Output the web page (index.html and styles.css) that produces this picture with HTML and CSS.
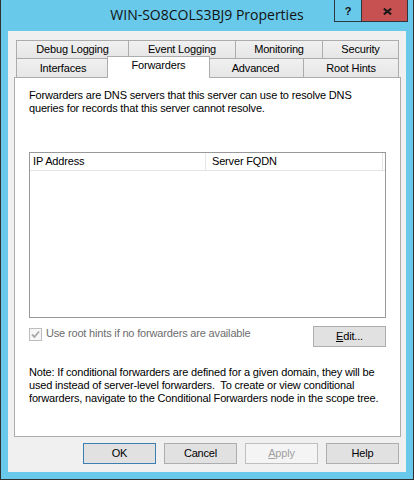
FILE: index.html
```html
<!DOCTYPE html>
<html>
<head>
<meta charset="utf-8">
<link rel="stylesheet" href="styles.css">
</head>
<body>
<div class="window">
  <div class="titlebar">
    <div class="title">WIN-SO8COLS3BJ9 Properties</div>
    <div class="caption">
      <div class="cbtn help">?</div>
      <div class="cbtn close"><svg width="9" height="7" viewBox="0 0 9 7"><path d="M0.8 0.6 L8.2 6.4 M8.2 0.6 L0.8 6.4" stroke="#1a1a1a" stroke-width="2" fill="none"/></svg></div>
    </div>
  </div>
  <div class="client">
    <div class="tabs">
      <div class="tabrow row1">
        <div class="tab w-debug">Debug Logging</div>
        <div class="tab w-event">Event Logging</div>
        <div class="tab w-mon">Monitoring</div>
        <div class="tab w-sec">Security</div>
      </div>
      <div class="tabrow row2">
        <div class="tab w-int">Interfaces</div>
        <div class="tab sel">Forwarders</div>
        <div class="tab w-adv">Advanced</div>
        <div class="tab w-root">Root Hints</div>
      </div>
    </div>
    <div class="panel">
      <p class="intro">Forwarders are DNS servers that this server can use to resolve DNS<br>queries for records that this server cannot resolve.</p>
      <div class="list">
        <div class="list-head">
          <div class="col c1">IP Address</div>
          <div class="col c2">Server FQDN</div>
        </div>
      </div>
      <div class="opts">
        <div class="check"><svg width="11" height="11" viewBox="0 0 11 11"><path d="M2 5.5 L4.5 8 L9 2.5" stroke="#a8a8a8" stroke-width="1.8" fill="none"/></svg></div>
        <div class="check-label">Use root hints if no forwarders are available</div>
        <div class="btn edit"><u>E</u>dit...</div>
      </div>
      <p class="note">Note: If conditional forwarders are defined for a given domain, they will be<br>used instead of server-level forwarders.&nbsp; To create or view conditional<br>forwarders, navigate to the Conditional Forwarders node in the scope tree.</p>
    </div>
    <div class="buttons">
      <div class="btn default">OK</div>
      <div class="btn">Cancel</div>
      <div class="btn disabled"><u>A</u>pply</div>
      <div class="btn">Help</div>
    </div>
  </div>
</div>
</body>
</html>
```
FILE: styles.css
```css
* { box-sizing: border-box; }
html, body { margin: 0; padding: 0; }
body {
  width: 414px;
  height: 480px;
  overflow: hidden;
  font-family: "Liberation Sans", Arial, sans-serif;
  font-size: 11px;
  letter-spacing: -0.17px;
  color: #000;
  background: #fff;
}
.window {
  width: 414px;
  height: 480px;
  background: #69c9ea;
  border: 1px solid #2f2f2f;
  border-top: 0;
  padding: 0 7px 7px;
  display: flex;
  flex-direction: column;
}
.titlebar {
  position: relative;
  height: 31px;
  margin: 0 -7px;
  flex: none;
}
.title {
  text-align: center;
  font-family: "Open Sans", "Noto Sans", sans-serif;
  font-size: 14px;
  letter-spacing: 0;
  line-height: 20px;
  padding-top: 5px;
  color: #111;
}
.caption {
  position: absolute;
  top: 0;
  right: 5px;
  display: flex;
  border: 1px solid #2e3640;
  border-top: 0;
}
.cbtn {
  height: 21px;
  display: flex;
  align-items: center;
  justify-content: center;
}
.cbtn.help {
  width: 27px;
  border-right: 1px solid #2e3640;
  font-weight: bold;
  font-size: 11px;
  letter-spacing: 0;
  color: #111;
  padding-top: 1px;
}
.cbtn.close {
  width: 45px;
  background: #c75050;
  padding-left: 5px;
  padding-top: 1px;
}
.client {
  flex: 1;
  background: #f0f0f0;
  display: flex;
  flex-direction: column;
}
.tabs {
  margin: 9px 0 0 6px;
  width: 387px;
  padding: 0 2px;
}
.tabrow { display: flex; }
.tab {
  border: 1px solid #acacac;
  border-bottom: 0;
  background: linear-gradient(#f0f0f0, #e6e6e6);
  text-align: center;
  line-height: 13px;
  white-space: nowrap;
}
.tab + .tab { margin-left: -1px; }
.row1 .tab { height: 18px; padding-top: 2px; }
.row2 .tab { height: 19px; padding-top: 3px; }
.w-debug { width: 113px; }
.w-event { width: 108px; }
.w-mon { width: 88px; }
.w-sec { width: 77px; }
.w-int { width: 94px; }
.w-adv { width: 97px; }
.w-root { width: 96px; }
.row2 .tab.sel {
  width: 103px;
  height: 22px;
  background: #fff;
  margin: -2px -2px -1px -3px;
  padding-top: 2px;
  position: relative;
  z-index: 1;
}
.panel {
  margin-left: 6px;
  width: 387px;
  height: 360px;
  border: 1px solid #acacac;
  background: #fff;
  padding: 11px 14px 0;
}
.intro, .note {
  margin: 0;
  line-height: 13px;
  white-space: nowrap;
}
.list {
  margin-top: 37px;
  height: 166px;
  border: 1px solid #999;
  background: #fff;
}
.list-head {
  display: flex;
  height: 18px;
  border-bottom: 1px solid #e5e5e5;
}
.col {
  line-height: 13px;
  padding-top: 2px;
  border-right: 1px solid #e5e5e5;
}
.c1 { width: 176px; padding-left: 3px; }
.c2 { width: 177px; padding-left: 6px; }
.opts {
  margin-top: 8px;
  height: 21px;
  display: flex;
  align-items: flex-start;
}
.check {
  width: 13px;
  height: 13px;
  margin-top: 2px;
  border: 1px solid #bcbcbc;
  background: #f7f7f7;
  display: flex;
  align-items: center;
  justify-content: center;
}
.check-label {
  margin-left: 4px;
  margin-top: 1px;
  line-height: 13px;
  color: #6d6d6d;
}
.btn {
  width: 73px;
  height: 21px;
  border: 1px solid #adadad;
  background: #e1e1e1;
  display: flex;
  align-items: center;
  justify-content: center;
  line-height: 13px;
}
.btn.edit { margin-left: auto; }
.btn.default { border-color: #3c7fb1; }
.btn.disabled {
  background: #f4f4f4;
  border-color: #bfbfbf;
  color: #a0a0a0;
}
.note { margin-top: 19px; }
.buttons {
  margin-top: 6px;
  display: flex;
  justify-content: flex-end;
  gap: 8px;
  padding-right: 7px;
}
```
